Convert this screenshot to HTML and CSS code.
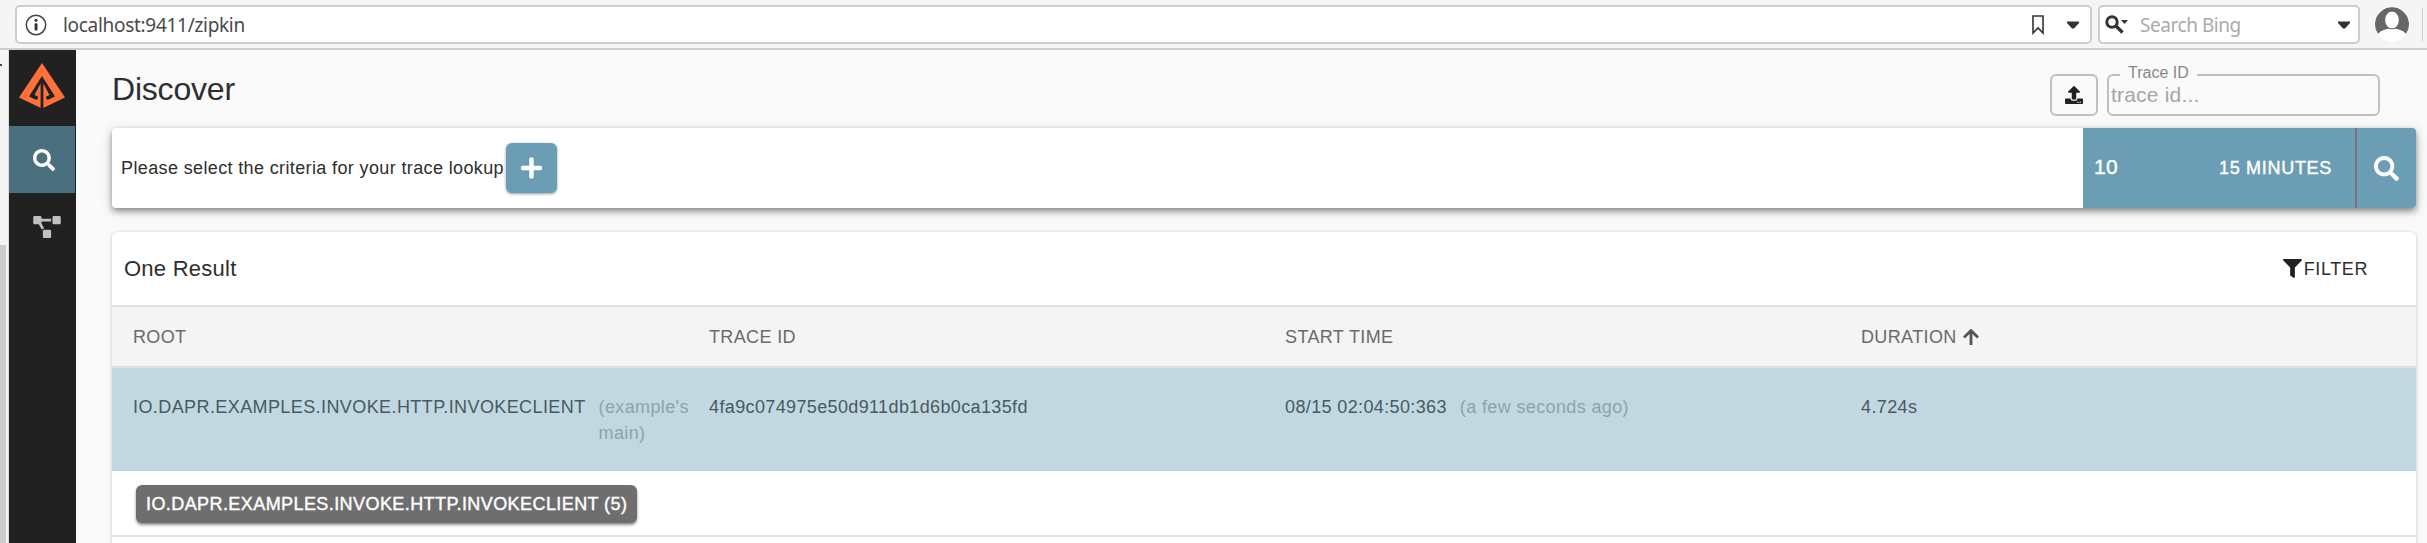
FILE: index.html
```html
<!DOCTYPE html>
<html lang="en">
<head>
<meta charset="utf-8">
<title>Zipkin</title>
<link rel="stylesheet" href="styles.css">
</head>
<body>
<header class="toolbar">
  <div class="address">
    <svg class="info" viewBox="0 0 22 22"><circle cx="11" cy="11" r="9.7" fill="none" stroke="#444" stroke-width="1.5"/><rect x="9.6" y="9.3" width="2.9" height="7.2" rx="1" fill="#333"/><circle cx="11" cy="6.3" r="1.5" fill="#333"/></svg>
    <span class="url">localhost:9411/zipkin</span>
    <svg class="bookmark" viewBox="0 0 12 20"><path d="M1 1h10v17l-5-5-5 5z" fill="none" stroke="#333" stroke-width="1.6"/></svg>
    <svg class="caret" viewBox="0 0 12 8"><path d="M0 .5h12v1.5L7 7.5H5L0 2z" fill="#333"/></svg>
  </div>
  <div class="search">
    <svg class="engine" viewBox="0 0 23 19"><circle cx="7" cy="7" r="5.2" fill="none" stroke="#333" stroke-width="3"/><path d="M10.5 10.5l7 7" stroke="#333" stroke-width="3.4"/><path d="M16 5h7l-3.500 4z" fill="#333"/></svg>
    <span class="search-text">Search Bing</span>
    <svg class="caret" viewBox="0 0 12 8"><path d="M0 .5h12v1.500L7 7.500H5L0 2z" fill="#333"/></svg>
  </div>
  <svg class="avatar" viewBox="0 0 36 36"><circle cx="18" cy="18" r="17.500" fill="#fff"/><path d="M4 28A17 17 0 1 1 32 28Q27 23 18 23Q9 23 4 28z" fill="#666"/><path d="M4 28Q9 22.500 18 22.500T32 28A17 17 0 0 1 4 28z" fill="#fff"/><ellipse cx="18" cy="14" rx="7.300" ry="9" fill="#fff" stroke="#666" stroke-width="1"/></svg>
  <span class="toolbar-end"></span>
</header>
<div class="page">
  <div class="gutter"><div class="dash"></div><div class="thumb"></div></div>
  <nav class="sidebar">
    <div class="logo"><svg viewBox="0 0 46 46"><path d="M23 0L46 34.500 23 45.500 0 34.500z" fill="#ff7139"/><path d="M23 13L10 33.500 17.500 37 19 35V33.500L15.500 32 21.600 20.500V46H24.400V20.500L30.500 32 27 33.500V35L28.500 37 36 33.500z" fill="#212121"/></svg></div>
    <div class="nav-item active"><svg class="i22" viewBox="0 0 512 512"><use href="#mag"/></svg></div>
    <div class="nav-item"><svg class="diagram" viewBox="0 0 640 512"><path d="M384 320H256c-17.670 0-32 14.330-32 32v128c0 17.670 14.330 32 32 32h128c17.670 0 32-14.330 32-32V352c0-17.670-14.330-32-32-32zM192 32c0-17.670-14.330-32-32-32H32C14.330 0 0 14.330 0 32v128c0 17.670 14.330 32 32 32h95.720l73.160 128.040C211.980 300.980 232.400 288 256 288h.280L192 175.510V128h224V64H192V32zM608 0H480c-17.670 0-32 14.330-32 32v128c0 17.670 14.330 32 32 32h128c17.670 0 32-14.330 32-32V32c0-17.670-14.330-32-32-32z"/></svg></div>
  </nav>
  <main class="content">
    <div class="heading">
      <h1>Discover</h1>
      <div class="upload"><svg viewBox="0 0 512 512"><path d="M296 384h-80c-13.300 0-24-10.700-24-24V192h-87.700c-17.800 0-26.700-21.500-14.100-34.100L242.300 5.700c7.500-7.500 19.800-7.500 27.300 0l152.200 152.200c12.600 12.600 3.700 34.100-14.100 34.100H320v168c0 13.300-10.700 24-24 24zm216-8v112c0 13.300-10.700 24-24 24H24c-13.300 0-24-10.700-24-24V376c0-13.300 10.700-24 24-24h136v8c0 30.900 25.100 56 56 56h80c30.900 0 56-25.100 56-56v-8h136c13.300 0 24 10.700 24 24zm-124 88c0-11-9-20-20-20s-20 9-20 20 9 20 20 20 20-9 20-20zm64 0c0-11-9-20-20-20s-20 9-20 20 9 20 20 20 20-9 20-20z"/></svg></div>
      <div class="trace-field"><span class="trace-label">Trace ID</span><span class="placeholder">trace id...</span></div>
    </div>
    <section class="lookup">
      <span class="prompt">Please select the criteria for your trace lookup</span>
      <div class="add"><svg viewBox="0 0 448 512"><path d="M416 208H272V64c0-17.670-14.330-32-32-32h-32c-17.670 0-32 14.330-32 32v144H32c-17.670 0-32 14.330-32 32v32c0 17.670 14.330 32 32 32h144v144c0 17.670 14.330 32 32 32h32c17.670 0 32-14.330 32-32V304h144c17.670 0 32-14.330 32-32v-32c0-17.670-14.330-32-32-32z"/></svg></div>
      <div class="controls"><span class="limit">10</span><span class="range">15 MINUTES</span></div>
      <div class="go"><svg viewBox="0 0 512 512"><path id="mag" d="M505 442.700L405.300 343c-4.500-4.500-10.600-7-17-7H372c27.600-35.300 44-79.700 44-128C416 93.100 322.900 0 208 0S0 93.100 0 208s93.100 208 208 208c48.300 0 92.700-16.400 128-44v16.300c0 6.400 2.500 12.500 7 17l99.700 99.700c9.400 9.400 24.600 9.400 33.900 0l28.300-28.300c9.400-9.400 9.400-24.600.100-34zM208 336c-70.700 0-128-57.200-128-128 0-70.700 57.200-128 128-128 70.700 0 128 57.200 128 128 0 70.700-57.200 128-128 128z"/></svg></div>
    </section>
    <section class="results">
      <div class="results-head"><h2>One Result</h2><div class="filter"><svg viewBox="0 0 512 512"><path d="M487.976 0H24.028C2.710 0-8.047 25.866 7.058 40.971L192 225.941V432c0 7.831 3.821 15.170 10.237 19.662l80 55.980C298.020 518.690 320 507.493 320 487.980V225.941l184.947-184.970C520.021 25.896 509.338 0 487.976 0z"/></svg><span>FILTER</span></div></div>
      <div class="row columns"><div>ROOT</div><div>TRACE ID</div><div>START TIME</div><div class="sorted">DURATION<svg viewBox="0 0 16 16"><path d="M8 16V2M1 8.500L8 1.500l7 7" fill="none" stroke="#555" stroke-width="2.800"/></svg></div></div>
      <div class="row trace">
        <div><span class="name">IO.DAPR.EXAMPLES.INVOKE.HTTP.INVOKECLIENT</span><span class="sub">(example's main)</span></div>
        <div>4fa9c074975e50d911db1d6b0ca135fd</div>
        <div><span>08/15 02:04:50:363</span><span class="sub">(a few seconds ago)</span></div>
        <div>4.724s</div>
      </div>
      <div class="services"><span class="chip">IO.DAPR.EXAMPLES.INVOKE.HTTP.INVOKECLIENT (5)</span></div>
    </section>
  </main>
</div>
</body>
</html>
```
FILE: styles.css
```css
* { box-sizing: border-box; }
body { margin: 0; height: 543px; overflow: hidden; background: #fafafa; color: #2e2e2e; font: 18px/26px "Liberation Sans", Arial, sans-serif; letter-spacing: .37px; display: flex; flex-direction: column; }
svg { display: block; flex: none; }
h1, h2 { margin: 0; font-weight: 400; }
.toolbar { height: 50px; flex: none; background: #f5f5f5; border-bottom: 2px solid #cdcdcd; padding: 5px 4px 0 15px; display: flex; align-items: flex-start; }
.address, .search { height: 39px; border: 2px solid #cdcdcd; border-radius: 5px; background: #fff; display: flex; align-items: center; font: 19px/34px "Noto Sans", "Open Sans", sans-serif; letter-spacing: -.3px; color: #4a4a4a; }
.address { width: 2077px; padding: 0 11px 0 8px; }
.info { width: 22px; height: 22px; }
.url { margin-left: 16px; flex: 1; }
.bookmark { width: 12px; height: 20px; margin-right: 23px; }
.caret { width: 12px; height: 8px; }
.search { width: 262px; margin-left: 6px; padding: 0 8px 0 5px; }
.engine { width: 23px; height: 19px; }
.search-text { margin-left: 12px; flex: 1; color: #aaa; letter-spacing: -.45px; }
.avatar { width: 36px; height: 36px; margin: 1px 0 0 14px; }
.toolbar-end { width: 1px; height: 33px; margin: 3px 0 0 auto; background: #cdcdcd; }
.page { flex: 1; display: flex; min-height: 0; }
.gutter { width: 9px; background: #f5f5f5; border-right: 1px solid #ddd; }
.dash { width: 2px; height: 2px; margin-top: 14px; background: #444; }
.thumb { width: 6px; height: 298px; margin-top: 179px; background: #cdcdcd; }
.sidebar { width: 67px; background: #212121; }
.logo { height: 76px; padding: 13px 0 0 10px; }
.logo svg { width: 46px; height: 46px; }
.nav-item { height: 67px; padding: 23px 0 0 24px; fill: #c0c0c0; }
.active { width: 66px; background: #4a6f7e; fill: #fff; }
.i22 { width: 22px; height: 22px; }
.diagram { width: 28px; height: 22px; }
.content { flex: 1; padding: 0 11px 0 36px; }
.heading { height: 78px; padding-right: 36px; display: flex; align-items: flex-start; }
h1 { font-size: 32px; line-height: 38px; letter-spacing: -.2px; margin: 20px auto 0 0; }
.upload { width: 48px; height: 42px; margin: 24px 9px 0 0; border: 2px solid #c0c0c0; border-radius: 6px; display: flex; align-items: center; justify-content: center; }
.upload svg { width: 18px; height: 18px; fill: #212121; }
.trace-field { position: relative; width: 273px; height: 42px; margin-top: 24px; border: 2px solid #c0c0c0; border-radius: 6px; padding: 7px 2px; }
.trace-label { position: absolute; left: 11px; top: -14px; width: 77px; padding-left: 8px; background: #fafafa; color: #888; font-size: 16px; line-height: 22px; letter-spacing: 0; white-space: nowrap; }
.placeholder { display: block; color: #a6a6a6; font-size: 21px; line-height: 24px; letter-spacing: .2px; }
.lookup { height: 80px; background: #fff; border-radius: 4px; box-shadow: 0 3px 6px rgba(0,0,0,.42), 0 4px 16px rgba(0,0,0,.1); display: flex; align-items: center; padding-left: 9px; }
.prompt { width: 385px; white-space: nowrap; }
.add { width: 51px; height: 50px; background: #6b9eb4; border-radius: 6px; box-shadow: 0 1px 3px rgba(0,0,0,.4); display: flex; align-items: center; justify-content: center; }
.add svg { width: 21px; height: 24px; fill: #fff; }
.controls { margin-left: auto; width: 274px; height: 80px; background: #6b9eb4; border-right: 2px solid #777; color: #fff; display: flex; align-items: center; justify-content: space-between; padding: 0 23px 0 11px; -webkit-text-stroke: .4px #fff; }
.limit { font-size: 21px; line-height: 24px; margin-top: -2px; }
.range { letter-spacing: .7px; }
.go { width: 59px; height: 80px; background: #6b9eb4; border-radius: 0 4px 4px 0; display: flex; align-items: center; justify-content: center; }
.go svg { width: 25px; height: 25px; fill: #fff; }
.results { margin-top: 24px; height: 330px; background: #fff; border-radius: 6px 6px 0 0; box-shadow: 0 1px 4px rgba(0,0,0,.22); }
.results-head { height: 73px; display: flex; justify-content: space-between; align-items: center; padding: 0 48px 0 12px; }
h2 { font-size: 22px; letter-spacing: .25px; }
.filter { display: flex; align-items: center; gap: 2px; letter-spacing: .6px; }
.filter svg { width: 19px; height: 19px; fill: #212121; }
.row { display: grid; grid-template-columns: repeat(4, 576px); }
.row > div { padding-left: 21px; display: flex; }
.columns { height: 63px; background: #f4f4f4; border-top: 2px solid #e0e0e0; border-bottom: 2px solid #dedfe0; color: #6a6a6a; align-items: center; }
.sorted { align-items: center; gap: 6px; }
.sorted svg { width: 16px; height: 16px; }
.trace { height: 103px; background: #c2d8e0; border-bottom: 1px solid #b4cdd6; padding-top: 26px; color: #465a63; }
.name { letter-spacing: .41px; }
.sub { margin-left: 13px; color: #8da3ab; }
.trace > div:first-child .sub { width: 98px; }
.services { height: 66px; border-bottom: 2px solid #e0e0e0; padding: 14px 0 0 24px; }
.chip { display: block; width: 501px; height: 38px; line-height: 38px; padding-left: 10px; background: #6e6e6e; color: #fff; border-radius: 6px; box-shadow: 0 2px 3px rgba(0,0,0,.45); letter-spacing: .42px; white-space: nowrap; -webkit-text-stroke: .4px #fff; }
```
